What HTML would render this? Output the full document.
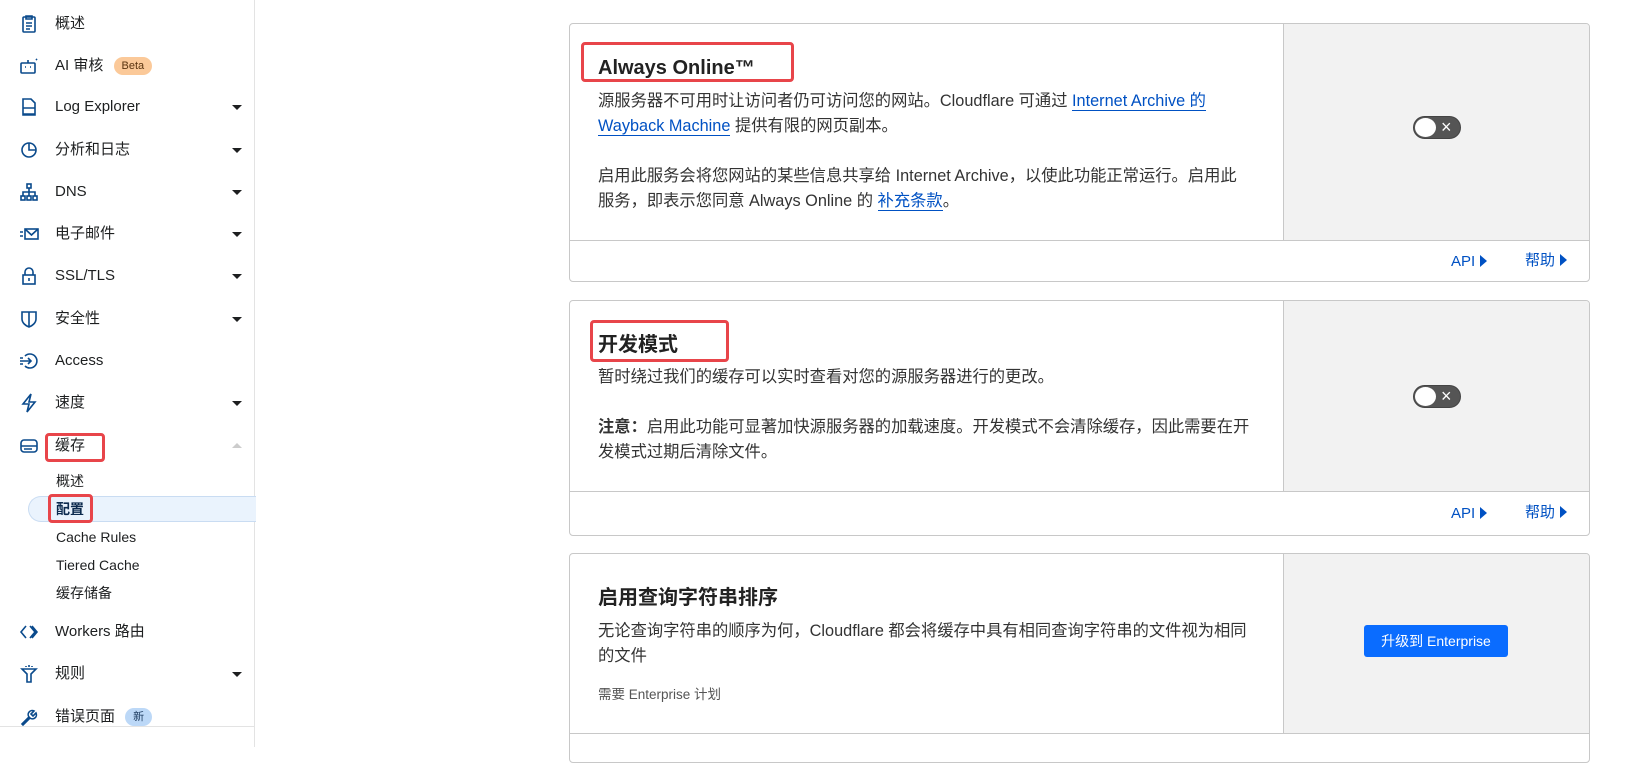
<!DOCTYPE html>
<html><head><meta charset="utf-8"><style>
*{box-sizing:border-box;margin:0;padding:0}
body{width:1626px;height:747px;overflow:hidden;background:#fff;font-family:"Liberation Sans","Noto Sans CJK SC",sans-serif;color:#222;position:relative}
.sb{position:absolute;left:0;top:0;width:255px;height:747px;border-right:1px solid #e3e3e3}
.it{position:absolute;left:55px;font-size:15px;color:#1d1f20;line-height:20px}
.ic{position:absolute;left:19px;width:20px;height:20px}
.car{position:absolute;left:232px;width:0;height:0;border-left:5px solid transparent;border-right:5px solid transparent;border-top:5px solid #1d1f20}
.sub{position:absolute;left:56px;font-size:14px;line-height:20px;color:#1d1f20}
.red{position:absolute;border:3px solid #e8454a;border-radius:4px}
.card{position:absolute;left:569px;width:1021px;border:1px solid #c8c8c8;border-radius:4px;background:#fff;overflow:hidden}
.gray{position:absolute;left:713px;top:0;right:0;background:#f2f2f2;border-left:1px solid #c8c8c8}
.foot{position:absolute;left:0;right:0;border-top:1px solid #c8c8c8}
.t{position:absolute;left:28px;font-size:20px;font-weight:bold;color:#222}
.p{position:absolute;left:28px;width:654px;font-size:16.3px;line-height:25px;color:#333}
a{color:#0051c3;text-decoration:none;border-bottom:1px solid #0051c3}
.tg{position:absolute;left:843px;width:48px;height:23px;border-radius:12px;background:#555;border:1px solid #444}
.tg:before{content:"";position:absolute;left:1px;top:1px;width:21px;height:19px;border-radius:50%;background:#fff}
.tg:after{content:"×";position:absolute;left:27px;top:-1px;color:#fff;font-size:18px;line-height:22px}
.fl{position:absolute;font-size:15px;color:#0051c3;line-height:20px}
.tri{display:inline-block;width:0;height:0;border-top:6px solid transparent;border-bottom:6px solid transparent;border-left:7px solid #0051c3;margin-left:5px;vertical-align:-1px}
</style></head><body>
<div class="sb">
<svg class="ic" style="top:14px" viewBox="0 0 20 20" fill="none" stroke="#0a4a8c" stroke-width="1.6"><rect x="4" y="3" width="12" height="15" rx="1"/><path d="M7 2h6v3H7zM7 9h6M7 12h6M7 15h4"/></svg>
<div class="it" style="top:14px">概述</div>
<svg class="ic" style="top:56px" viewBox="0 0 20 20" fill="none" stroke="#0a4a8c" stroke-width="1.6"><rect x="2" y="7" width="14" height="10" rx="1"/><path d="M9 7V4M6 11h1M11 11h1M17 3l1 1"/></svg>
<div class="it" style="top:56px">AI 审核 <span style="display:inline-block;background:#fbc999;color:#5a3410;font-size:11px;border-radius:9px;padding:1px 8px;line-height:16px;margin-left:6px;vertical-align:1px">Beta</span></div>
<svg class="ic" style="top:97px" viewBox="0 0 20 20" fill="none" stroke="#0a4a8c" stroke-width="1.6"><path d="M4 2h8l4 4v12H4zM4 11h12v6H4z"/></svg>
<div class="it" style="top:97px">Log Explorer</div><div class="car" style="top:105px"></div>
<svg class="ic" style="top:140px" viewBox="0 0 20 20" fill="none" stroke="#0a4a8c" stroke-width="1.6"><circle cx="10" cy="10" r="7"/><path d="M10 3v7h7"/></svg>
<div class="it" style="top:140px">分析和日志</div><div class="car" style="top:148px"></div>
<svg class="ic" style="top:182px" viewBox="0 0 20 20" fill="none" stroke="#0a4a8c" stroke-width="1.6"><rect x="8" y="2" width="4" height="4"/><rect x="2" y="14" width="4" height="4"/><rect x="8" y="14" width="4" height="4"/><rect x="14" y="14" width="4" height="4"/><path d="M10 6v8M4 14v-4h12v4"/></svg>
<div class="it" style="top:182px">DNS</div><div class="car" style="top:190px"></div>
<svg class="ic" style="top:224px" viewBox="0 0 20 20" fill="none" stroke="#0a4a8c" stroke-width="1.6"><rect x="6" y="5" width="13" height="10"/><path d="M6 5l6.5 6L19 5M1 8h3M1 12h3"/></svg>
<div class="it" style="top:224px">电子邮件</div><div class="car" style="top:232px"></div>
<svg class="ic" style="top:266px" viewBox="0 0 20 20" fill="none" stroke="#0a4a8c" stroke-width="1.6"><rect x="4" y="9" width="12" height="9"/><path d="M6 9V6a4 4 0 018 0v3M10 12v3"/></svg>
<div class="it" style="top:266px">SSL/TLS</div><div class="car" style="top:274px"></div>
<svg class="ic" style="top:309px" viewBox="0 0 20 20" fill="none" stroke="#0a4a8c" stroke-width="1.6"><path d="M3 3h14v7c0 4-4 7-7 8-3-1-7-4-7-8zM10 3v15"/></svg>
<div class="it" style="top:309px">安全性</div><div class="car" style="top:317px"></div>
<svg class="ic" style="top:351px" viewBox="0 0 20 20" fill="none" stroke="#0a4a8c" stroke-width="1.6"><path d="M6 5a7 7 0 110 10M1 10h11M9 7l3 3-3 3M1 7h3M1 13h3"/></svg>
<div class="it" style="top:351px">Access</div>
<svg class="ic" style="top:393px" viewBox="0 0 20 20" fill="none" stroke="#0a4a8c" stroke-width="1.6"><path d="M12 1L4 11h6l-2 8 8-10h-6z"/></svg>
<div class="it" style="top:393px">速度</div><div class="car" style="top:401px"></div>
<svg class="ic" style="top:436px" viewBox="0 0 20 20" fill="none" stroke="#0a4a8c" stroke-width="1.6"><rect x="2" y="4" width="16" height="12" rx="3"/><path d="M2 10h16M5 13h8"/></svg>
<div class="it" style="top:436px">缓存</div>
<div class="car" style="top:443px;border-top:0;border-bottom:5px solid #ccc"></div>
<div class="red" style="left:45px;top:433px;width:60px;height:29px"></div>
<div class="sub" style="top:471px">概述</div>
<div style="position:absolute;left:28px;top:496px;width:228px;height:26px;background:#eaf3fd;border:1px solid #c9dcf2;border-right:0;border-radius:13px 0 0 13px"></div>
<div class="sub" style="top:499px;font-weight:bold;color:#0d2b4f">配置</div>
<div class="red" style="left:48px;top:494px;width:45px;height:29px"></div>
<div class="sub" style="top:527px">Cache Rules</div>
<div class="sub" style="top:555px">Tiered Cache</div>
<div class="sub" style="top:583px">缓存储备</div>
<svg class="ic" style="top:622px" viewBox="0 0 20 20" fill="none" stroke="#0a4a8c" stroke-width="1.6"><path d="M7 4l-5 6 5 6M11 4l5 6-5 6M13 4l5 6-5 6"/></svg>
<div class="it" style="top:622px">Workers 路由</div>
<svg class="ic" style="top:664px" viewBox="0 0 20 20" fill="none" stroke="#0a4a8c" stroke-width="1.6"><path d="M3 5h14l-5 5v8h-4v-8zM7 2v1M10 1v2M13 2v1"/></svg>
<div class="it" style="top:664px">规则</div><div class="car" style="top:672px"></div>
<svg class="ic" style="top:707px" viewBox="0 0 20 20" fill="none" stroke="#0a4a8c" stroke-width="1.6"><path d="M3 17l7-7a4 4 0 015-6l-3 3 2 2 3-3a4 4 0 01-6 5l-7 7z"/></svg>
<div class="it" style="top:707px">错误页面 <span style="display:inline-block;background:#bcd8f7;color:#1d3b5f;font-size:11px;border-radius:9px;padding:1px 8px;line-height:16px;margin-left:6px;vertical-align:1px">新</span></div>
<div style="position:absolute;left:0;top:726px;width:255px;border-top:1px solid #e3e3e3"></div>
</div>

<div class="card" style="top:23px;height:259px">
<div class="gray" style="height:216px"></div>
<div class="foot" style="top:216px"></div>
<div class="t" style="top:33px">Always Online™</div>
<div class="p" style="top:65px">源服务器不可用时让访问者仍可访问您的网站。Cloudflare 可通过 <a>Internet Archive 的 Wayback Machine</a> 提供有限的网页副本。<br><br>启用此服务会将您网站的某些信息共享给 Internet Archive，以使此功能正常运行。启用此服务，即表示您同意 Always Online 的 <a>补充条款</a>。</div>
<div class="tg" style="top:92px"></div>
<div class="fl" style="top:228px;left:881px">API<span class="tri"></span></div>
<div class="fl" style="top:227px;left:955px">帮助<span class="tri"></span></div>
</div>
<div class="red" style="left:581px;top:42px;width:213px;height:40px"></div>

<div class="card" style="top:300px;height:236px">
<div class="gray" style="height:190px"></div>
<div class="foot" style="top:190px"></div>
<div class="t" style="top:27px">开发模式</div>
<div class="p" style="top:64px">暂时绕过我们的缓存可以实时查看对您的源服务器进行的更改。<br><br><b>注意：</b>启用此功能可显著加快源服务器的加载速度。开发模式不会清除缓存，因此需要在开发模式过期后清除文件。</div>
<div class="tg" style="top:84px"></div>
<div class="fl" style="top:203px;left:881px">API<span class="tri"></span></div>
<div class="fl" style="top:202px;left:955px">帮助<span class="tri"></span></div>
</div>
<div class="red" style="left:590px;top:320px;width:139px;height:42px"></div>

<div class="card" style="top:553px;height:210px">
<div class="gray" style="height:179px"></div>
<div class="foot" style="top:179px"></div>
<div class="t" style="top:27px">启用查询字符串排序</div>
<div class="p" style="top:65px">无论查询字符串的顺序为何，Cloudflare 都会将缓存中具有相同查询字符串的文件视为相同的文件</div>
<div style="position:absolute;left:28px;top:129px;font-size:13.5px;color:#555">需要 Enterprise 计划</div>
<div style="position:absolute;left:794px;top:71px;width:144px;height:32px;background:#0a6cff;border-radius:3px;color:#fff;font-size:14px;text-align:center;line-height:32px">升级到 Enterprise</div>
</div>
</body></html>
